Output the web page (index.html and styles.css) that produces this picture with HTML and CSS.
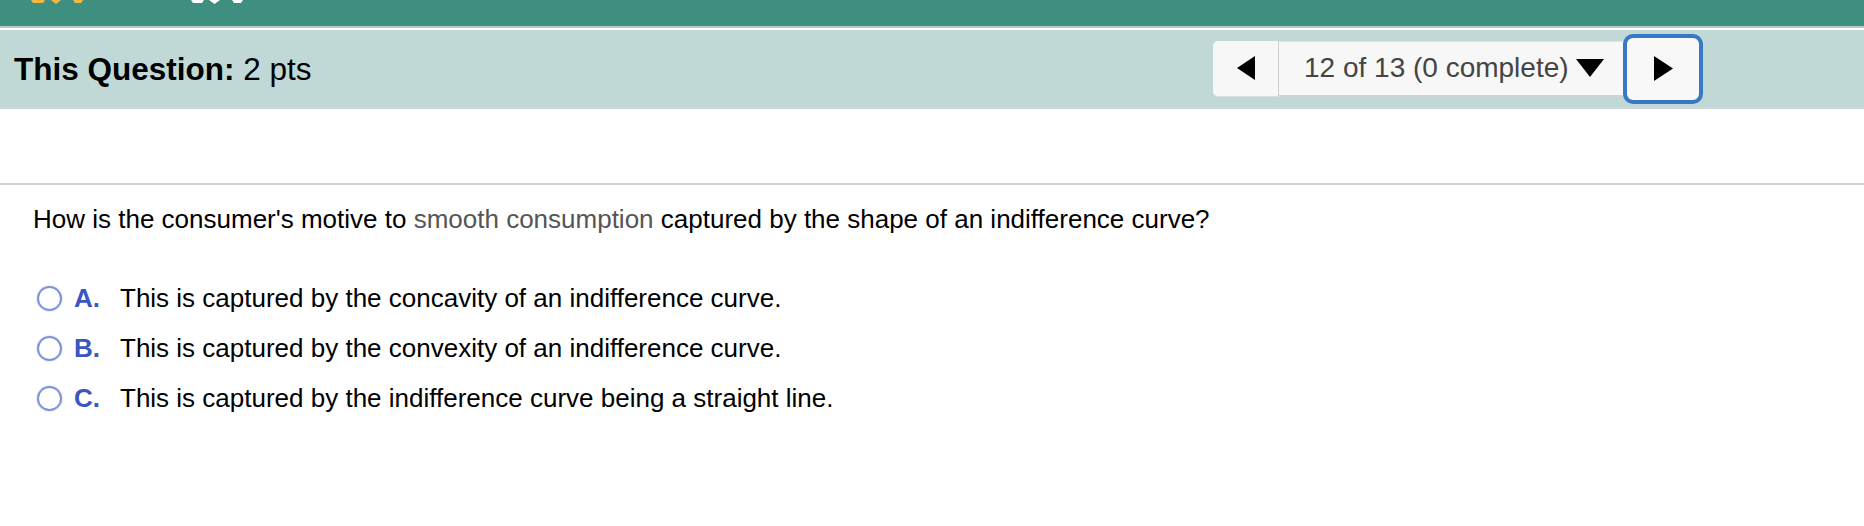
FILE: index.html
```html
<!DOCTYPE html>
<html>
<head>
<meta charset="utf-8">
<title>Question</title>
<link rel="stylesheet" href="styles.css">
</head>
<body>
<div class="topbar">
  <svg class="topicons" width="260" height="26" viewBox="0 0 260 26">
    <path d="M31 0 H45 L43 3 H33 Z" fill="#f4b942"/>
    <path d="M51 0 H61 L56 4 Z" fill="#f4b942"/>
    <path d="M73 0 H83 L81 3 H75 Z" fill="#f4b942"/>
    <path d="M191 0 H204 L202 3 H193 Z" fill="#ffffff"/>
    <path d="M209 0 H220 L214.5 4 Z" fill="#ffffff"/>
    <path d="M232 0 H243 L241 3 H234 Z" fill="#ffffff"/>
  </svg>
</div>
<div class="header">
  <div class="title"><b>This Question:</b> 2 pts</div>
  <div class="nav">
    <div class="prev">
      <svg width="18" height="24" viewBox="0 0 18 24"><polygon points="18,0 18,24 0,12" fill="#000"/></svg>
    </div>
    <div class="select">
      <span class="seltext">12 of 13 (0 complete)</span>
      <svg width="28" height="18" viewBox="0 0 28 18"><polygon points="0,0 28,0 14,18" fill="#000"/></svg>
    </div>
    <div class="next">
      <svg width="19" height="25" viewBox="0 0 19 25"><polygon points="0,0 19,12.5 0,25" fill="#000"/></svg>
    </div>
  </div>
</div>
<div class="spacer"></div>
<div class="question">
  <p class="qtext">How is the consumer's motive to <span class="term">smooth consumption</span> captured by the shape of an indifference curve?</p>
  <ul class="options">
    <li class="option"><span class="radio"></span><span class="letter">A.</span><span class="otext">This is captured by the concavity of an indifference curve.</span></li>
    <li class="option"><span class="radio"></span><span class="letter">B.</span><span class="otext">This is captured by the convexity of an indifference curve.</span></li>
    <li class="option"><span class="radio"></span><span class="letter">C.</span><span class="otext">This is captured by the indifference curve being a straight line.</span></li>
  </ul>
</div>
</body>
</html>
```

FILE: styles.css
```css
html, body {
  margin: 0;
  padding: 0;
  background: #ffffff;
  font-family: "Liberation Sans", Arial, Helvetica, sans-serif;
  color: #000;
}

.topbar {
  height: 26px;
  background: #3e8f80;
  border-bottom: 2px solid #b5c9c6;
  overflow: hidden;
}

.topicons {
  display: block;
}

.header {
  display: flex;
  align-items: center;
  height: 77px;
  margin-top: 2px;
  background: #c0d9d6;
  border-bottom: 2px solid #d2d6dc;
  padding-left: 14px;
  padding-right: 161px;
}

.title {
  font-size: 31.5px;
  line-height: 36px;
  color: #000;
}

.title b {
  font-weight: bold;
}

.nav {
  margin-left: auto;
  display: flex;
  align-items: center;
}

.prev {
  width: 66px;
  height: 56px;
  box-sizing: border-box;
  background: #f7f7f7;
  border-radius: 5px 0 0 5px;
  border-right: 1px solid #cfcfcf;
  border-bottom: 1px solid #dcdcdc;
  display: flex;
  align-items: center;
  justify-content: center;
}

.select {
  width: 344px;
  height: 56px;
  box-sizing: border-box;
  background: #f7f7f7;
  border-top: 1px solid #e2e2e2;
  border-bottom: 2px solid #d3d3d3;
  display: flex;
  align-items: center;
  padding-left: 25px;
  gap: 7px;
}

.seltext {
  font-size: 28px;
  color: #444;
  line-height: 32px;
}

.next {
  width: 80px;
  height: 70px;
  box-sizing: border-box;
  background: #f8f8f8;
  border: 4px solid #3779c6;
  border-radius: 10px;
  display: flex;
  align-items: center;
  justify-content: center;
}

.spacer {
  height: 74px;
  border-bottom: 2px solid #cdd1d8;
}

.question {
  padding-left: 33px;
}

.qtext {
  margin: 19px 0 0 0;
  font-size: 26px;
  line-height: 30px;
}

.term {
  color: #555555;
}

.options {
  list-style: none;
  margin: 39px 0 0 0;
  padding: 0 0 0 4px;
}

.option {
  display: flex;
  align-items: center;
  height: 50px;
  font-size: 26px;
  line-height: 50px;
}

.radio {
  width: 25px;
  height: 25px;
  box-sizing: border-box;
  border: 2.5px solid #7f92d8;
  border-radius: 50%;
  box-shadow: 0 0 1.5px rgba(110, 130, 210, 0.7);
  margin-right: 12px;
  flex: none;
}

.letter {
  width: 46px;
  flex: none;
  font-weight: bold;
  color: #3a56c2;
}

.otext {
  color: #000;
}
```
